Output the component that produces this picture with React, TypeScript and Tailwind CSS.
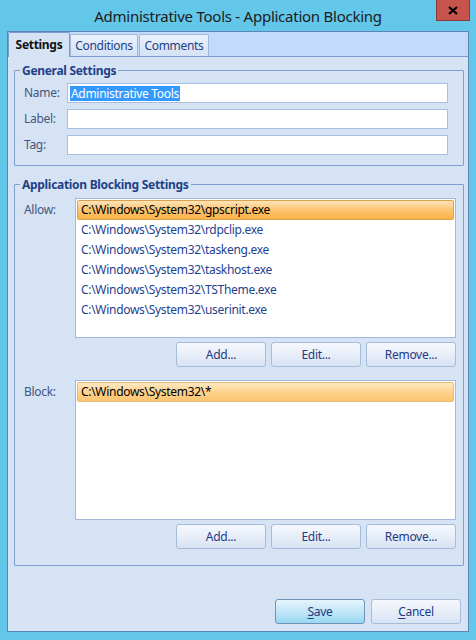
import React from 'react';

// ==================== DATA ====================

const ALLOW_ITEMS = [
    'C:\\Windows\\System32\\gpscript.exe',
    'C:\\Windows\\System32\\rdpclip.exe',
    'C:\\Windows\\System32\\taskeng.exe',
    'C:\\Windows\\System32\\taskhost.exe',
    'C:\\Windows\\System32\\TSTheme.exe',
    'C:\\Windows\\System32\\userinit.exe'
];

const BLOCK_ITEMS = ['C:\\Windows\\System32\\*'];

const FONT = { fontFamily: '"Noto Sans", "Open Sans", sans-serif' };

// ==================== PIECES ====================

function Button({ children, primary = false }: { children: React.ReactNode; primary?: boolean }) {
    return (
        <button
            className={
                primary
                    ? 'w-[90px] h-[25px] rounded-[3px] border border-[#6f93b8] bg-gradient-to-b from-[#e6f4fc] via-[#c2e6f7] to-[#98d8f2] text-[12px] text-[#1d3a86]'
                    : 'w-[90px] h-[25px] rounded-[3px] border border-[#a6bcd9] bg-gradient-to-b from-[#f5f8fd] via-[#e8eef8] to-[#d7e3f4] text-[12px] text-[#1d3a86]'
            }
        >
            {children}
        </button>
    );
}

function ListBox({ items, active }: { items: string[]; active: boolean }) {
    return (
        <div className="w-[381px] h-[140px] border border-[#a3b9dc] bg-white p-[1px]">
            {items.map((item, i) => (
                <div
                    key={item}
                    className={
                        i === 0
                            ? active
                                ? 'h-[20px] flex items-center px-[3px] rounded-[2px] border border-[#d9a24e] bg-gradient-to-b from-[#fee4b6] via-[#fcc46e] to-[#fbb146] text-[12px] text-black'
                                : 'h-[20px] flex items-center px-[3px] rounded-[2px] border border-[#e6bb72] bg-gradient-to-b from-[#fee8c0] via-[#fdd28e] to-[#fcc56f] text-[12px] text-black'
                            : 'h-[20px] flex items-center px-[4px] text-[12px] text-[#1f3f8f]'
                    }
                >
                    {item}
                </div>
            ))}
        </div>
    );
}

function TextRow({ label, value }: { label: string; value?: string }) {
    return (
        <div className="flex items-center">
            <span className="w-[43px] text-[12px] text-[#44577d]">{label}</span>
            <div className="w-[381px] h-[20px] border border-[#a9bfdf] bg-white flex items-center px-[2px]">
                {value && <span className="bg-[#3399ff] text-white text-[12px] leading-[15px] px-[1px]">{value}</span>}
            </div>
        </div>
    );
}

// ==================== APP ====================

export default function App() {
    return (
        <div className="w-[476px] h-[640px] bg-[#63c7e9] flex flex-col tracking-[-0.3px]" style={FONT}>
            {/* Title bar */}
            <div className="h-[31px] relative flex items-center justify-center">
                <span className="text-[15px] text-[#1b1b1b] pt-[1px] tracking-[-0.25px]">Administrative Tools - Application Blocking</span>
                <div className="absolute top-0 right-[6px] w-[34px] h-[21px] bg-[#c7544c] border border-[#8e3b35] border-t-0 flex items-center justify-center">
                    <svg width="10" height="9" viewBox="0 0 10 9">
                        <path d="M1 1 L9 8 M9 1 L1 8" stroke="#000" strokeWidth="2.2" />
                    </svg>
                </div>
            </div>

            {/* Client */}
            <div className="mx-[7px] h-[601px] border border-[#5a86b8] bg-[#c3dbfa] flex flex-col">
                {/* Tabs */}
                <div className="h-[24px] flex items-end">
                    <div className="w-[62px] h-[25px] -mb-[1px] flex items-center justify-center border border-b-0 border-[#7a9cd3] bg-[#d6e3f4] rounded-t-[2px] text-[12px] font-bold text-[#111] z-10">
                        Settings
                    </div>
                    <div className="w-[68px] h-[22px] flex items-center justify-center border border-b-0 border-[#a0b9de] bg-gradient-to-b from-[#eaf1fb] to-[#d4e2f4] rounded-t-[2px] text-[12px] text-[#1f3f87]">
                        Conditions
                    </div>
                    <div className="w-[70px] h-[22px] ml-[1px] flex items-center justify-center border border-b-0 border-[#a0b9de] bg-gradient-to-b from-[#eaf1fb] to-[#d4e2f4] rounded-t-[2px] text-[12px] text-[#1f3f87]">
                        Comments
                    </div>
                </div>

                {/* Panel */}
                <div className="flex-1 border-t border-[#7a9cd3] bg-[#d6e3f4] flex flex-col">
                    <fieldset className="mt-[5px] ml-[6px] mr-[4px] border border-[#7e9fd2] rounded-[1px]">
                        <legend className="ml-[5px] px-[2px] text-[12px] font-bold text-[#1f3f87] leading-[17px]">General Settings</legend>
                        <div className="pl-[9px] pr-[14px] pt-[4px] pb-[10px] flex flex-col gap-[6px]">
                            <TextRow label="Name:" value="Administrative Tools" />
                            <TextRow label="Label:" />
                            <TextRow label="Tag:" />
                        </div>
                    </fieldset>

                    <fieldset className="mt-[10px] ml-[6px] mr-[4px] border border-[#7e9fd2] rounded-[1px]">
                        <legend className="ml-[5px] px-[2px] text-[12px] font-bold text-[#1f3f87] leading-[17px]">Application Blocking Settings</legend>
                        <div className="pl-[9px] pr-[6px] pt-[5px] pb-[16px]">
                            <div className="flex">
                                <span className="w-[51px] pt-[3px] text-[12px] text-[#44577d]">Allow:</span>
                                <div className="flex flex-col items-end gap-[4px]">
                                    <ListBox items={ALLOW_ITEMS} active />
                                    <div className="flex gap-[5px]">
                                        <Button>Add...</Button>
                                        <Button>Edit...</Button>
                                        <Button>Remove...</Button>
                                    </div>
                                </div>
                            </div>
                            <div className="flex mt-[13px]">
                                <span className="w-[51px] pt-[3px] text-[12px] text-[#44577d]">Block:</span>
                                <div className="flex flex-col items-end gap-[4px]">
                                    <ListBox items={BLOCK_ITEMS} active={false} />
                                    <div className="flex gap-[5px]">
                                        <Button>Add...</Button>
                                        <Button>Edit...</Button>
                                        <Button>Remove...</Button>
                                    </div>
                                </div>
                            </div>
                        </div>
                    </fieldset>

                    <div className="flex-1" />

                    <div className="flex justify-end gap-[6px] pr-[7px] pb-[7px]">
                        <Button primary>
                            <span className="underline underline-offset-2">S</span>ave
                        </Button>
                        <Button>
                            <span className="underline underline-offset-2">C</span>ancel
                        </Button>
                    </div>
                </div>
            </div>
        </div>
    );
}
